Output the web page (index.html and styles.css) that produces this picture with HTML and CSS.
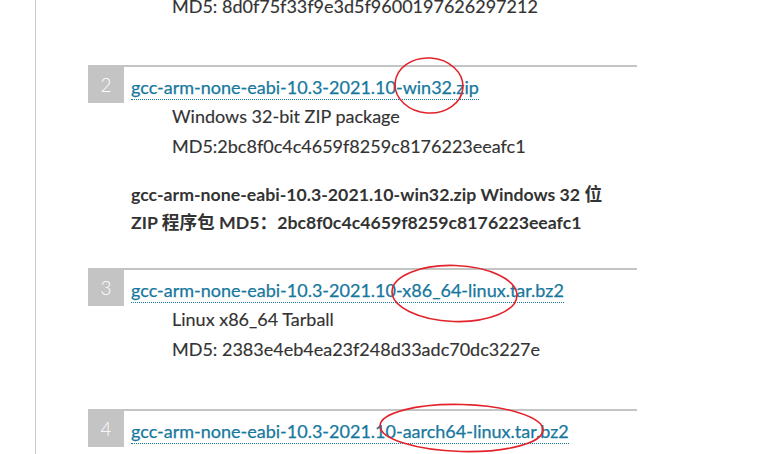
FILE: index.html
```html
<!DOCTYPE html>
<html>
<head>
<meta charset="utf-8">
<link rel="stylesheet" href="styles.css">
</head>
<body>
<div class="page">
  <div class="rail">
    <div class="item first">
      <div class="desc">MD5: 8d0f75f33f9e3d5f9600197626297212</div>
    </div>

    <div class="item">
      <div class="num">2</div>
      <a class="link" href="#">gcc-arm-none-eabi-10.3-2021.10-win32.zip</a>
      <div class="desc">Windows 32-bit ZIP package</div>
      <div class="desc">MD5:2bc8f0c4c4659f8259c8176223eeafc1</div>
    </div>

    <p class="note">gcc-arm-none-eabi-10.3-2021.10-win32.zip Windows 32 位 ZIP 程序包 MD5：2bc8f0c4c4659f8259c8176223eeafc1</p>

    <div class="item">
      <div class="num">3</div>
      <a class="link" href="#">gcc-arm-none-eabi-10.3-2021.10-x86_64-linux.tar.bz2</a>
      <div class="desc">Linux x86_64 Tarball</div>
      <div class="desc">MD5: 2383e4eb4ea23f248d33adc70dc3227e</div>
    </div>

    <div class="item">
      <div class="num">4</div>
      <a class="link" href="#">gcc-arm-none-eabi-10.3-2021.10-aarch64-linux.tar.bz2</a>
      <div class="desc">Linux AArch64 Tarball</div>
      <div class="desc">MD5: 3fe3d8bb693bd0a6e4615b6569443d0d</div>
    </div>
  </div>

  <svg class="marks" width="775" height="454" viewBox="0 0 775 454">
    <ellipse cx="429" cy="85.5" rx="34" ry="27.5" transform="rotate(4 429 85.5)"/>
    <ellipse cx="454.5" cy="293.5" rx="62.5" ry="28" transform="rotate(2 454.5 293.5)"/>
    <ellipse cx="461.5" cy="428" rx="81.5" ry="23.5" transform="rotate(1.5 461.5 428)"/>
  </svg>
</div>
</body>
</html>
```

FILE: styles.css
```css
html, body {
  margin: 0;
  padding: 0;
  background: #fff;
  overflow: hidden;
}

.page {
  position: relative;
  width: 775px;
  height: 454px;
  overflow: hidden;
  font-family: Lato, "Noto Sans CJK SC", sans-serif;
  color: #333;
}

.rail {
  margin-left: 35px;
  margin-top: -9px;
  border-left: 1px solid #c8c8c8;
  min-height: 500px;
  padding-left: 52px;
  display: flex;
  flex-direction: column;
}

.item {
  width: 549px;
  border-top: 2px solid #c4c4c4;
  display: grid;
  grid-template-columns: 36px 1fr;
  column-gap: 7px;
  margin-top: 45px;
}

.item.first {
  border-top: none;
  margin-top: 0;
}

.first + .item {
  margin-top: 44px;
}

.num {
  grid-column: 1;
  grid-row: 1 / span 3;
  align-self: start;
  height: 36px;
  background: #c4c4c4;
  color: #fff;
  font-size: 19px;
  font-weight: 300;
  line-height: 36px;
  text-align: center;
}

.link {
  grid-column: 2;
  grid-row: 1;
  justify-self: start;
  margin-top: 5px;
  margin-bottom: 1px;
  font-size: 18px;
  line-height: 30px;
  color: #17789d;
  text-decoration: none;
  height: 27px;
  border-bottom: 1px dotted #17789d;
  -webkit-text-stroke: 0.25px #17789d;
}

.desc {
  grid-column: 2;
  padding-left: 41px;
  font-size: 18px;
  line-height: 30px;
  color: #333;
  -webkit-text-stroke: 0.15px #333;
}

.note {
  margin: 20px 0 0 43px;
  width: 480px;
  font-size: 17.7px;
  font-weight: 700;
  line-height: 28px;
  color: #333;
}

.note + .item {
  margin-top: 31px;
}

.marks {
  position: absolute;
  left: 0;
  top: 0;
  pointer-events: none;
}

.marks ellipse {
  fill: none;
  stroke: #e3232b;
  stroke-width: 1.6;
}
```
